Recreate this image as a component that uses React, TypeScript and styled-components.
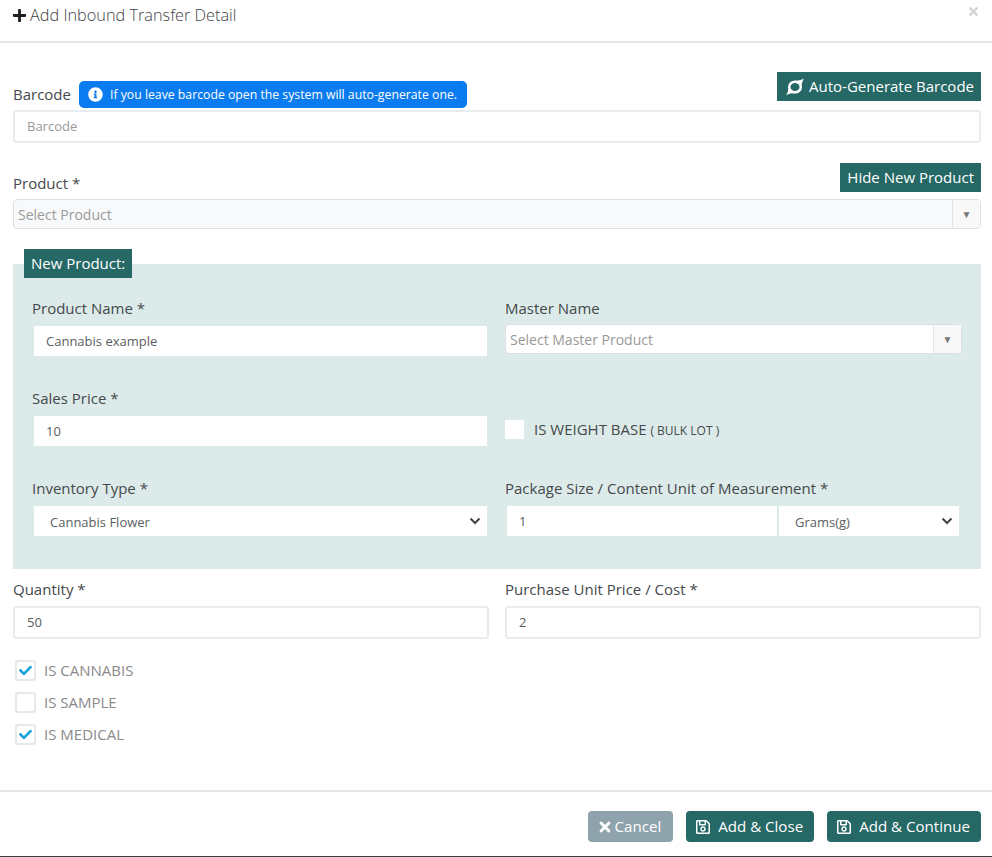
import React from "react";
import styled, { createGlobalStyle } from "styled-components";
import { FaPlus, FaTimes, FaRegSave, FaCheck, FaInfoCircle } from "react-icons/fa";

const GlobalStyle = createGlobalStyle`
    html, body {
        margin: 0;
        padding: 0;
        background: #fff;
        font-family: "Open Sans", "Noto Sans", sans-serif;
        color: #3c4043;
    }
    * { box-sizing: border-box; }
`;

const Modal = styled.div`
    width: 992px;
    height: 857px;
    display: flex;
    flex-direction: column;
    overflow: hidden;
    border-bottom: 1px solid #3a3f42;
`;

const Header = styled.div`
    height: 43px;
    flex: none;
    padding: 3px 13px 0;
    display: flex;
    align-items: flex-start;
    justify-content: space-between;
    border-bottom: 2px solid #e6e6e6;
`;

const Title = styled.div`
    display: flex;
    align-items: center;
    gap: 3px;
    font-size: 16.3px;
    font-weight: 300;
    line-height: 24px;
    color: #3f4345;
    svg { color: #1d1d1d; font-size: 15px; margin-left: -1px; }
`;

const CloseIcon = styled.span`
    color: #d4d4d4;
    font-size: 13px;
    margin: 1px -1px 0 0;
`;

const Body = styled.div`
    flex: 1;
    padding: 29px 11px 0 13px;
    display: flex;
    flex-direction: column;
`;

const LabelRow = styled.div<{ $height: number; $top?: number }>`
    display: flex;
    justify-content: space-between;
    align-items: flex-start;
    height: ${p => p.$height}px;
    margin-top: ${p => p.$top ?? 0}px;
`;

const LabelGroup = styled.div<{ $labelOffset: number }>`
    display: flex;
    align-items: flex-start;
    gap: 8px;
    padding-top: 8px;

    label {
        margin-top: ${p => p.$labelOffset}px;
    }
`;

const Label = styled.label`
    display: block;
    font-size: 15px;
    line-height: 20px;
    color: #45494c;
`;

const InfoBadge = styled.span`
    display: flex;
    align-items: center;
    gap: 7px;
    height: 27px;
    padding: 0 10px 0 9px;
    margin-top: 1px;
    background: #0b7bf0;
    color: #fff;
    border-radius: 5px;
    font-size: 12.25px;
    svg { font-size: 15px; }
`;

const TealButton = styled.button`
    display: flex;
    align-items: center;
    gap: 5px;
    height: 29px;
    padding: 0 7px 2px;
    border: 0;
    background: #256865;
    color: #fff;
    font: inherit;
    font-size: 15px;
    svg { margin: 2px 0 0 2px; }
`;

const Input = styled.div<{ $muted?: boolean }>`
    height: 33px;
    display: flex;
    align-items: center;
    padding: 0 12px 1px;
    background: #fff;
    border: 2px solid #e9ecef;
    border-radius: 3px;
    font-size: 13px;
    color: ${p => (p.$muted ? "#999" : "#5a5e61")};
`;

const BlankInput = styled(Input)`
    height: 32px;
    padding-bottom: 0;
    border-width: 1px 2px;
    border-color: transparent;
    border-radius: 0;
    background-clip: padding-box;
`;

const SelectBox = styled.div<{ $disabled?: boolean }>`
    height: 30px;
    display: flex;
    align-items: stretch;
    background: ${p => (p.$disabled ? "#f8f9fb" : "#fff")};
    border: 1px solid #dcdfe2;
    border-radius: 4px;
    font-size: 14px;
    color: #999;
`;

const PanelSelectBox = styled(SelectBox)`
    margin-top: -1px;
`;

const SelectText = styled.span`
    flex: 1;
    padding-left: 4px;
    line-height: 29px;
`;

const SelectArrow = styled.span`
    width: 28px;
    display: flex;
    align-items: center;
    justify-content: center;
    background: #f8f8f8;
    border-left: 1px solid #e4e4e4;
    color: #777;
    font-size: 10px;
`;

const NewProductTag = styled.div`
    align-self: flex-start;
    margin: 20px 0 0 11px;
    height: 29px;
    padding: 0 7px 2px;
    display: flex;
    align-items: center;
    background: #256865;
    color: #fff;
    font-size: 15px;
    position: relative;
    z-index: 1;
`;

const NewProductPanel = styled.div`
    margin-top: -14px;
    background: #dcebe9;
    height: 305px;
    padding: 34px 19px 0 19px;
    display: grid;
    grid-template-columns: 457px 457px;
    column-gap: 16px;
    grid-auto-rows: 90px;
`;

const Field = styled.div<{ $gap: number }>`
    display: flex;
    flex-direction: column;
    gap: ${p => p.$gap}px;
`;

const WeightRow = styled.div`
    display: flex;
    align-items: center;
    gap: 10px;
    padding-top: 13px;
    margin-bottom: 21px;
    font-size: 15px;
    color: #45494c;
    small { font-size: 12px; }
`;

const WhiteBox = styled.span`
    width: 19px;
    height: 19px;
    background: #fff;
`;

const NativeSelect = styled(BlankInput)<{ $indent: number }>`
    justify-content: space-between;
    padding-left: ${p => p.$indent}px;
    padding-right: 6px;
`;

const SelectValue = styled.span`
    padding-top: 2px;
`;

const Chevron = () => (
    <svg width="12" height="8" viewBox="0 0 12 8" fill="none" stroke="#444" strokeWidth="2">
        <path d="M1.5 1.5 6 6l4.5-4.5" />
    </svg>
);

const UnitRow = styled.div`
    display: flex;
    gap: 2px;
    padding: 0 2px;
`;

const UnitValue = styled(BlankInput)`
    width: 270px;
    border-width: 1px 0;
`;

const UnitSelect = styled(NativeSelect)`
    width: 180px;
    border-width: 1px 0;
`;

const QuantityGrid = styled.div`
    display: grid;
    grid-template-columns: 476px 476px;
    column-gap: 16px;
    margin-top: 10px;
`;

const ChecksList = styled.div`
    display: flex;
    flex-direction: column;
    gap: 11px;
    margin-top: 21px;
    padding-left: 2px;
`;

const CheckRow = styled.div`
    display: flex;
    align-items: center;
    gap: 8px;
    height: 21px;
    font-size: 15px;
    color: #8a8a8a;
`;

const CheckLabel = styled.span`
    margin-top: -2px;
`;

const CheckBox = styled.span`
    width: 21px;
    height: 21px;
    display: flex;
    align-items: center;
    justify-content: center;
    border: 2px solid #e6e8ea;
    border-radius: 3px;
    color: #1ba5d8;
    font-size: 13px;
`;

const Footer = styled.div`
    height: 66px;
    flex: none;
    border-top: 2px solid #e6e6e6;
    display: flex;
    justify-content: flex-end;
    gap: 13px;
    padding: 19px 11px 0 0;
`;

const FooterButton = styled.button<{ $muted?: boolean }>`
    height: 31px;
    display: flex;
    align-items: center;
    gap: ${p => (p.$muted ? 2 : 7)}px;
    padding: 0 ${p => (p.$muted ? 12 : 11)}px 2px 9px;
    border: 0;
    border-radius: 4px;
    background: ${p => (p.$muted ? "#8fa3ad" : "#256865")};
    color: #fff;
    font: inherit;
    font-size: 15.1px;
    svg { font-size: 16px; margin-top: 2px; }
`;

const SwirlIcon = () => (
    <svg width="18" height="18" viewBox="0 0 18 18" fill="none">
        <ellipse cx="9" cy="9" rx="5.8" ry="5.3" stroke="#fff" strokeWidth="2.5" />
        <path d="M9 2.6C12 2.8 15 2.4 17.8.6 16.8 3 15.8 5 15.4 7.6zM9 15.4C6 15.2 3 15.6.2 17.4 1.2 15 2.2 13 2.6 10.4z" fill="#fff" />
    </svg>
);

const App: React.FC = () => (
    <>
        <GlobalStyle />
        <Modal>
            <Header>
                <Title>
                    <FaPlus />
                    Add Inbound Transfer Detail
                </Title>
                <CloseIcon>
                    <FaTimes />
                </CloseIcon>
            </Header>
            <Body>
                <LabelRow $height={38}>
                    <LabelGroup $labelOffset={4}>
                        <Label>Barcode</Label>
                        <InfoBadge>
                            <FaInfoCircle />
                            If you leave barcode open the system will auto-generate one.
                        </InfoBadge>
                    </LabelGroup>
                    <TealButton>
                        <SwirlIcon />
                        Auto-Generate Barcode
                    </TealButton>
                </LabelRow>
                <Input $muted>Barcode</Input>
                <LabelRow $height={36} $top={20}>
                    <LabelGroup $labelOffset={2}>
                        <Label>Product *</Label>
                    </LabelGroup>
                    <TealButton>Hide New Product</TealButton>
                </LabelRow>
                <SelectBox $disabled>
                    <SelectText>Select Product</SelectText>
                    <SelectArrow>▼</SelectArrow>
                </SelectBox>
                <NewProductTag>New Product:</NewProductTag>
                <NewProductPanel>
                    <Field $gap={7}>
                        <Label>Product Name *</Label>
                        <BlankInput>Cannabis example</BlankInput>
                    </Field>
                    <Field $gap={7}>
                        <Label>Master Name</Label>
                        <PanelSelectBox>
                            <SelectText>Select Master Product</SelectText>
                            <SelectArrow>▼</SelectArrow>
                        </PanelSelectBox>
                    </Field>
                    <Field $gap={7}>
                        <Label>Sales Price *</Label>
                        <BlankInput>10</BlankInput>
                    </Field>
                    <WeightRow>
                        <WhiteBox />
                        <span>
                            IS WEIGHT BASE <small>( BULK LOT )</small>
                        </span>
                    </WeightRow>
                    <Field $gap={7}>
                        <Label>Inventory Type *</Label>
                        <NativeSelect $indent={16}>
                            <SelectValue>Cannabis Flower</SelectValue>
                            <Chevron />
                        </NativeSelect>
                    </Field>
                    <Field $gap={7}>
                        <Label>Package Size / Content Unit of Measurement *</Label>
                        <UnitRow>
                            <UnitValue>1</UnitValue>
                            <UnitSelect $indent={16}>
                                <SelectValue>Grams(g)</SelectValue>
                                <Chevron />
                            </UnitSelect>
                        </UnitRow>
                    </Field>
                </NewProductPanel>
                <QuantityGrid>
                    <Field $gap={7}>
                        <Label>Quantity *</Label>
                        <Input>50</Input>
                    </Field>
                    <Field $gap={7}>
                        <Label>Purchase Unit Price / Cost *</Label>
                        <Input>2</Input>
                    </Field>
                </QuantityGrid>
                <ChecksList>
                    <CheckRow>
                        <CheckBox>
                            <FaCheck />
                        </CheckBox>
                        <CheckLabel>IS CANNABIS</CheckLabel>
                    </CheckRow>
                    <CheckRow>
                        <CheckBox />
                        <CheckLabel>IS SAMPLE</CheckLabel>
                    </CheckRow>
                    <CheckRow>
                        <CheckBox>
                            <FaCheck />
                        </CheckBox>
                        <CheckLabel>IS MEDICAL</CheckLabel>
                    </CheckRow>
                </ChecksList>
            </Body>
            <Footer>
                <FooterButton $muted>
                    <FaTimes />
                    Cancel
                </FooterButton>
                <FooterButton>
                    <FaRegSave />
                    Add &amp; Close
                </FooterButton>
                <FooterButton>
                    <FaRegSave />
                    Add &amp; Continue
                </FooterButton>
            </Footer>
        </Modal>
    </>
);

export default App;
